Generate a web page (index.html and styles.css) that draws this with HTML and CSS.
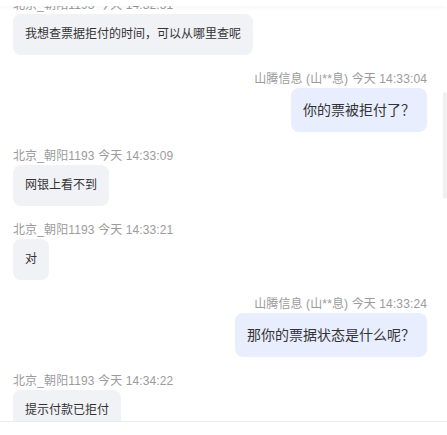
FILE: index.html
```html
<!DOCTYPE html>
<html lang="zh-CN">
<head>
<meta charset="utf-8">
<title>Chat</title>
<link rel="stylesheet" href="styles.css">
</head>
<body>
<div class="page">
  <div class="chat">
    <div class="list">
      <div class="msg left">
        <div class="meta">北京_朝阳1193 今天 14:32:51</div>
        <div class="bubble">我想查票据拒付的时间，可以从哪里查呢</div>
      </div>
      <div class="msg right">
        <div class="meta">山腾信息 (山**息) 今天 14:33:04</div>
        <div class="bubble">你的票被拒付了？</div>
      </div>
      <div class="msg left">
        <div class="meta">北京_朝阳1193 今天 14:33:09</div>
        <div class="bubble">网银上看不到</div>
      </div>
      <div class="msg left">
        <div class="meta">北京_朝阳1193 今天 14:33:21</div>
        <div class="bubble">对</div>
      </div>
      <div class="msg right">
        <div class="meta">山腾信息 (山**息) 今天 14:33:24</div>
        <div class="bubble">那你的票据状态是什么呢？</div>
      </div>
      <div class="msg left">
        <div class="meta">北京_朝阳1193 今天 14:34:22</div>
        <div class="bubble">提示付款已拒付</div>
      </div>
    </div>
    <div class="fade"></div>
    <div class="thumb"></div>
  </div>
  <div class="footer"></div>
</div>
</body>
</html>
```

FILE: styles.css
```css
html, body {
  margin: 0;
  padding: 0;
  background: #ffffff;
}

body {
  font-family: "Liberation Sans", "Noto Sans CJK SC", sans-serif;
  color: #333333;
}

.page {
  width: 447px;
  height: 435px;
  display: flex;
  flex-direction: column;
}

.chat {
  position: relative;
  height: 422px;
  overflow: hidden;
  padding: 0 20px 0 13px;
  box-sizing: border-box;
  border-bottom: 1px solid #ebebeb;
}

.list {
  display: flex;
  flex-direction: column;
  gap: 15px;
  margin-top: -4px;
}

.msg {
  display: flex;
  flex-direction: column;
}

.msg.left {
  align-items: flex-start;
}

.msg.right {
  align-items: flex-end;
}

.meta {
  font-size: 12px;
  line-height: 18px;
  height: 18px;
  color: #9b9b9b;
  letter-spacing: 0.12px;
  white-space: nowrap;
}

.bubble {
  border-radius: 8px;
  padding: 12px;
  white-space: nowrap;
}

.left .bubble {
  background: #f1f2f6;
  font-size: 12px;
  line-height: 17px;
}

.right .bubble {
  background: #e8eefe;
  font-size: 14px;
  line-height: 20px;
}

.fade {
  position: absolute;
  left: 0;
  top: 0;
  width: 100%;
  height: 6px;
  background: #ffffff;
  box-shadow: 0 2px 5px rgba(0, 0, 0, 0.035);
}

.thumb {
  position: absolute;
  right: 0;
  top: 92px;
  width: 4px;
  height: 107px;
  border-radius: 2px;
  background: #f0f0f0;
}

.footer {
  flex: 1;
  background: #ffffff;
}
```
